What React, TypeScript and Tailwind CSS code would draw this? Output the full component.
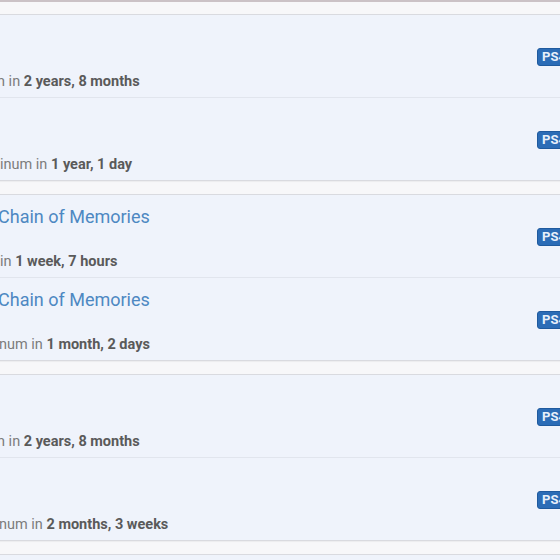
import React from "react";

type Row = { title?: string; pre: string; bold: string; shift: string };

const cards: Row[][] = [
  [
    { pre: "n in ", bold: "2 years, 8 months", shift: "-ml-[3px]" },
    { pre: "inum in ", bold: "1 year, 1 day", shift: "ml-0" },
  ],
  [
    { title: "Chain of Memories", pre: "in ", bold: "1 week, 7 hours", shift: "ml-0" },
    { title: "Chain of Memories", pre: "num in ", bold: "1 month, 2 days", shift: "-ml-[1px]" },
  ],
  [
    { pre: "n in ", bold: "2 years, 8 months", shift: "-ml-[3px]" },
    { pre: "num in ", bold: "2 months, 3 weeks", shift: "-ml-[1px]" },
  ],
  [{ pre: "", bold: "", shift: "ml-0" }],
];

function RowView({ row, last }: { row: Row; last: boolean }) {
  return (
    <div
      className={
        "flex items-center " +
        (last ? "h-[82px]" : "h-[83px] border-b border-[#e1e5ed]")
      }
    >
      <div className="flex h-full min-w-0 flex-1 flex-col pt-[10px]">
        <div className="h-[24px] -ml-[2px] whitespace-nowrap text-[18px] leading-[24px] text-[#4d88c2]">
          {row.title ?? ""}
        </div>
        <div
          className={
            "mt-[23px] h-[20px] whitespace-nowrap text-[14.5px] leading-[20px] " + row.shift
          }
        >
          <span className="text-[#7c7c7c]">{row.pre}</span>
          <span className="font-bold text-[#5a5a5a]">{row.bold}</span>
        </div>
      </div>
      <div className="w-[23px] shrink-0">
        <div className="inline-flex h-[18px] items-center whitespace-nowrap rounded-[3px] border border-[#1f5a9e] bg-[#2b6cb6] pl-[4px] pr-[8px] text-[13px] font-bold leading-none text-[#e8f0fa]">
          PS4
        </div>
      </div>
    </div>
  );
}

export default function App() {
  return (
    <div
      className="h-[560px] w-[560px] overflow-hidden bg-[#f7f7f9]"
      style={{ fontFamily: "Roboto, 'Liberation Sans', sans-serif" }}
    >
      <div className="h-[2px] bg-[#cbc2c6]" />
      <div className="flex flex-col gap-[13px] pt-[12px]">
        {cards.map((rows, i) => (
          <div
            key={i}
            className="border-y border-[#d9dadf] bg-[#eff3fb] shadow-[0_1px_1px_rgba(0,0,0,0.04)]"
          >
            {rows.map((r, j) => (
              <RowView key={j} row={r} last={j === rows.length - 1} />
            ))}
          </div>
        ))}
      </div>
    </div>
  );
}
